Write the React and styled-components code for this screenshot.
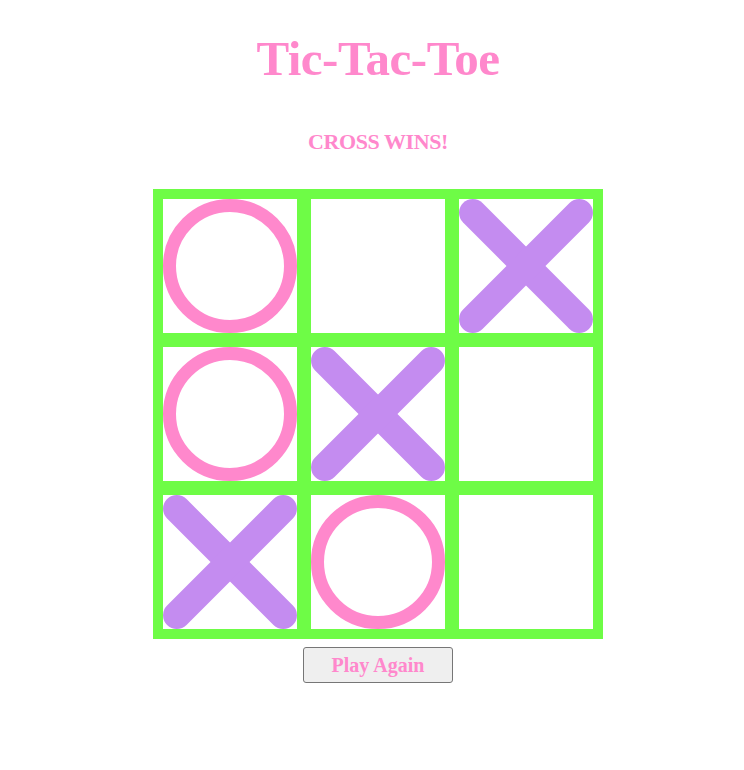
import React, { useState } from "react";
import styled, { createGlobalStyle } from "styled-components";

const PINK = "#ff88cc";
const PURPLE = "#c48cf0";
const GREEN = "#6efc46";

const GlobalStyle = createGlobalStyle`
  body {
    margin: 0;
    background: #ffffff;
    font-family: "Liberation Serif", "Times New Roman", serif;
  }
`;

const Page = styled.main`
  display: flex;
  flex-direction: column;
  align-items: center;
  padding: 31px 0 40px 12px;
`;

const Title = styled.h1`
  margin: 0;
  font-size: 49px;
  line-height: 55px;
  font-weight: 700;
  color: ${PINK};
  letter-spacing: -0.5px;
`;

const Status = styled.h2`
  margin: 43px 0 0;
  font-size: 22px;
  line-height: 26px;
  font-weight: 700;
  color: ${PINK};
  letter-spacing: -0.4px;
`;

const Board = styled.div`
  margin-top: 34px;
  display: grid;
  grid-template-columns: repeat(3, 134px);
  grid-template-rows: repeat(3, 134px);
  gap: 14px;
  padding: 10px;
  background: ${GREEN};
`;

const Cell = styled.button`
  display: flex;
  align-items: center;
  justify-content: center;
  width: 134px;
  height: 134px;
  padding: 0;
  border: none;
  background: #ffffff;
  cursor: ${(props) => (props.$filled ? "default" : "pointer")};
`;

const ResetButton = styled.button`
  margin-top: 8px;
  width: 150px;
  height: 36px;
  background: #efefef;
  border: 1px solid #767676;
  border-radius: 3px;
  font-family: "Liberation Serif", "Times New Roman", serif;
  font-size: 20px;
  font-weight: 700;
  color: ${PINK};
  cursor: pointer;
`;

const Circle = () => (
  <svg width="134" height="134" viewBox="0 0 134 134">
    <circle cx="67" cy="67" r="60.5" fill="none" stroke={PINK} strokeWidth="13" />
  </svg>
);

const Cross = () => (
  <svg width="134" height="134" viewBox="0 0 134 134">
    <g stroke={PURPLE} strokeWidth="27.5" strokeLinecap="round">
      <line x1="13.8" y1="13.8" x2="120.2" y2="120.2" />
      <line x1="120.2" y1="13.8" x2="13.8" y2="120.2" />
    </g>
  </svg>
);

const initialBoard = ["O", null, "X", "O", "X", null, "X", "O", null];

const App = () => {
  const [cells, setCells] = useState(initialBoard);

  return (
    <>
      <GlobalStyle />
      <Page>
        <Title>Tic-Tac-Toe</Title>
        <Status>CROSS WINS!</Status>
        <Board>
          {cells.map((value, i) => (
            <Cell key={i} $filled={!!value} aria-label={`cell ${i + 1}`}>
              {value === "O" && <Circle />}
              {value === "X" && <Cross />}
            </Cell>
          ))}
        </Board>
        <ResetButton onClick={() => setCells(Array(9).fill(null))}>Play Again</ResetButton>
      </Page>
    </>
  );
};

export default App;
